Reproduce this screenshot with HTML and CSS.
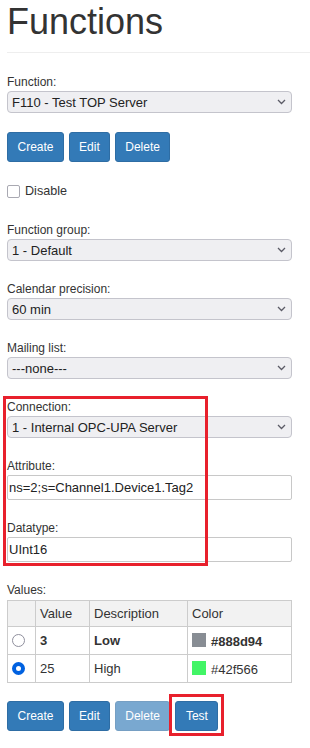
FILE: index.html
```html
<!DOCTYPE html>
<html lang="en">
<head>
    <meta charset="UTF-8">
    <meta name="viewport" content="width=device-width, initial-scale=1.0">
    <title>Functions</title>
    <link rel="stylesheet" href="styles.css">
</head>
<body>

    <div class="page">
        <h1 class="title">Functions</h1>
        <hr class="rule">

        <form class="function-form" action="/functions" method="POST">
            <div class="field">
                <label for="function">Function:</label>
                <div class="select-wrap">
                    <select id="function" name="function">
                        <option>F110 - Test TOP Server</option>
                    </select>
                    <svg class="chevron" width="9" height="6" viewBox="0 0 9 6"><path d="M1 1l3.5 3.5L8 1" fill="none" stroke="#5b5b66" stroke-width="1.3"/></svg>
                </div>
            </div>

            <div class="actions">
                <button type="button" class="btn">Create</button>
                <button type="button" class="btn">Edit</button>
                <button type="button" class="btn">Delete</button>
            </div>

            <div class="check-row">
                <input type="checkbox" id="disable" name="disable">
                <label for="disable">Disable</label>
            </div>

            <div class="field">
                <label for="group">Function group:</label>
                <div class="select-wrap">
                    <select id="group" name="group">
                        <option>1 - Default</option>
                    </select>
                    <svg class="chevron" width="9" height="6" viewBox="0 0 9 6"><path d="M1 1l3.5 3.5L8 1" fill="none" stroke="#5b5b66" stroke-width="1.3"/></svg>
                </div>
            </div>

            <div class="field">
                <label for="precision">Calendar precision:</label>
                <div class="select-wrap">
                    <select id="precision" name="precision">
                        <option>60 min</option>
                    </select>
                    <svg class="chevron" width="9" height="6" viewBox="0 0 9 6"><path d="M1 1l3.5 3.5L8 1" fill="none" stroke="#5b5b66" stroke-width="1.3"/></svg>
                </div>
            </div>

            <div class="field">
                <label for="mailing">Mailing list:</label>
                <div class="select-wrap">
                    <select id="mailing" name="mailing">
                        <option>---none---</option>
                    </select>
                    <svg class="chevron" width="9" height="6" viewBox="0 0 9 6"><path d="M1 1l3.5 3.5L8 1" fill="none" stroke="#5b5b66" stroke-width="1.3"/></svg>
                </div>
            </div>

            <div class="highlight">
                <div class="field">
                    <label for="connection">Connection:</label>
                    <div class="select-wrap">
                        <select id="connection" name="connection">
                            <option>1 - Internal OPC-UPA Server</option>
                        </select>
                        <svg class="chevron" width="9" height="6" viewBox="0 0 9 6"><path d="M1 1l3.5 3.5L8 1" fill="none" stroke="#5b5b66" stroke-width="1.3"/></svg>
                    </div>
                </div>

                <div class="field">
                    <label for="attribute">Attribute:</label>
                    <input type="text" id="attribute" name="attribute" value="ns=2;s=Channel1.Device1.Tag2">
                </div>

                <div class="field">
                    <label for="datatype">Datatype:</label>
                    <input type="text" id="datatype" name="datatype" value="UInt16">
                </div>
            </div>

            <div class="field values">
                <label>Values:</label>
                <table class="values-table">
                    <tr>
                        <th class="col-pick"></th>
                        <th class="col-value">Value</th>
                        <th class="col-desc">Description</th>
                        <th class="col-color">Color</th>
                    </tr>
                    <tr class="strong">
                        <td><input type="radio" name="value" class="radio"></td>
                        <td>3</td>
                        <td>Low</td>
                        <td><span class="swatch" style="background-color: #888d94;"></span>#888d94</td>
                    </tr>
                    <tr>
                        <td><input type="radio" name="value" class="radio" checked></td>
                        <td>25</td>
                        <td>High</td>
                        <td><span class="swatch" style="background-color: #42f566;"></span>#42f566</td>
                    </tr>
                </table>
            </div>

            <div class="actions">
                <button type="button" class="btn">Create</button>
                <button type="button" class="btn">Edit</button>
                <button type="button" class="btn" disabled>Delete</button>
                <div class="marked">
                    <button type="button" class="btn">Test</button>
                </div>
            </div>
        </form>
    </div>

</body>
</html>
```

FILE: styles.css
```css
body {
    font-family: "Liberation Sans", Arial, sans-serif;
    color: #333;
    margin: 0;
    padding: 0;
}
.page {
    padding-left: 7px;
    padding-bottom: 16px;
}
.title {
    font-size: 36px;
    font-weight: normal;
    line-height: 40px;
    margin: 2px 0 0 0;
}
.rule {
    border: 0;
    border-top: 1px solid #eee;
    margin: 10px 0 0 0;
}
.function-form {
    width: 285px;
    padding-top: 22px;
}
.field {
    margin-bottom: 21px;
}
.field label {
    display: block;
    font-size: 12px;
    line-height: 14px;
    margin-bottom: 2px;
}
.select-wrap {
    position: relative;
}
.select-wrap select {
    display: block;
    width: 100%;
    height: 22px;
    margin: 0;
    padding: 0 20px 0 4px;
    font-family: inherit;
    font-size: 13px;
    color: #222;
    background-color: #efeff2;
    border: 1px solid #c4c4cc;
    border-radius: 4px;
    -webkit-appearance: none;
    appearance: none;
}
.select-wrap .chevron {
    position: absolute;
    right: 6px;
    top: 8px;
    pointer-events: none;
}
.field input[type="text"] {
    display: block;
    box-sizing: border-box;
    width: 100%;
    height: 25px;
    margin: 0;
    padding: 0 1px;
    font-family: inherit;
    font-size: 13px;
    color: #222;
    border: 1px solid #c8c8c8;
    border-radius: 2px;
}
.actions {
    display: flex;
    align-items: flex-start;
    gap: 4.5px;
    margin-top: -2px;
}
.btn {
    display: block;
    height: 30px;
    font-family: inherit;
    font-size: 12px;
    line-height: 18px;
    padding: 5px 9.5px;
    color: #fff;
    background-color: #337ab7;
    border: 1px solid #2e6da4;
    border-radius: 3px;
    cursor: pointer;
}
.btn:disabled {
    opacity: 0.65;
    cursor: default;
}
.marked {
    position: relative;
    height: 30px;
    margin-left: 0.5px;
}
.marked::after {
    content: "";
    position: absolute;
    top: -7px;
    left: -6px;
    right: -6px;
    height: 42px;
    box-sizing: border-box;
    border: 3px solid #e8202c;
    pointer-events: none;
}
.check-row {
    display: flex;
    align-items: center;
    height: 18px;
    margin: 20px 0 23px 0;
    font-size: 12.6px;
}
.check-row input {
    -webkit-appearance: none;
    appearance: none;
    width: 13px;
    height: 13px;
    margin: 0 5px 0 0;
    border: 1px solid #a9a9b2;
    border-radius: 2px;
    background: #fff;
}
.highlight {
    position: relative;
}
.highlight::after {
    content: "";
    position: absolute;
    top: -4px;
    left: -4px;
    width: 205px;
    height: 170px;
    box-sizing: border-box;
    border: 3px solid #e8202c;
    pointer-events: none;
}
.values label {
    margin-bottom: 3px;
}
.values {
    margin-bottom: 20px;
}
.values-table {
    width: 100%;
    border-collapse: collapse;
    font-size: 13px;
}
.values-table th,
.values-table td {
    border: 1px solid #ccc;
    padding: 0 4px;
    text-align: left;
}
.values-table th {
    background-color: #f2f2f2;
    font-weight: normal;
    height: 25px;
}
.values-table td {
    height: 27px;
}
.values-table .strong td {
    font-weight: bold;
}
.col-pick {
    width: 19px;
}
.col-value {
    width: 45px;
}
.col-desc {
    width: 89px;
}
.radio {
    -webkit-appearance: none;
    appearance: none;
    display: block;
    width: 13px;
    height: 13px;
    margin: 0;
    border: 1px solid #8f8f9d;
    border-radius: 50%;
    background: #fff;
}
.radio:checked {
    border: 4px solid #0061e0;
}
.swatch {
    display: inline-block;
    width: 14px;
    height: 14px;
    margin-right: 5px;
    vertical-align: -1px;
}
```
